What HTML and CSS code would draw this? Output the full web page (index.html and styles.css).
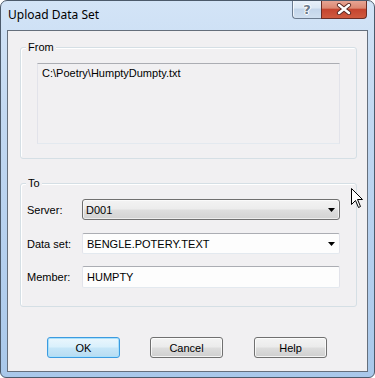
FILE: index.html
```html
<!DOCTYPE html>
<html>
<head>
<meta charset="utf-8">
<title>Upload Data Set</title>
<link rel="stylesheet" href="styles.css">
</head>
<body>
<div class="window">
  <div class="titlebar">
    <span class="title">Upload Data Set</span>
    <div class="caption-buttons">
      <div class="cbtn help-btn"><span class="qmark">?</span></div>
      <div class="cbtn close-btn">
        <svg width="16" height="12" viewBox="0 0 16 12">
          <path d="M3 2 L13 10 M13 2 L3 10" stroke="#5a2a24" stroke-width="4.2" stroke-linecap="round" fill="none"/>
          <path d="M3 2 L13 10 M13 2 L3 10" stroke="#ffffff" stroke-width="2.4" stroke-linecap="round" fill="none"/>
        </svg>
      </div>
    </div>
  </div>
  <div class="client">
    <div class="group group-from">
      <div class="group-title">From</div>
      <div class="readonly-box">C:\Poetry\HumptyDumpty.txt</div>
    </div>
    <div class="group group-to">
      <div class="group-title">To</div>
      <div class="row">
        <span class="label">Server:</span>
        <div class="combo combo-list">
          <span class="combo-text">D001</span>
          <svg class="arrow" width="7" height="4" viewBox="0 0 7 4"><path d="M0 0 H7 L3.5 4 Z" fill="#000"/></svg>
        </div>
      </div>
      <div class="row row-data">
        <span class="label">Data set:</span>
        <div class="combo combo-edit">
          <span class="combo-text">BENGLE.POTERY.TEXT</span>
          <svg class="arrow" width="7" height="4" viewBox="0 0 7 4"><path d="M0 0 H7 L3.5 4 Z" fill="#000"/></svg>
        </div>
      </div>
      <div class="row row-member">
        <span class="label">Member:</span>
        <div class="edit">HUMPTY</div>
      </div>
    </div>
    <div class="buttons">
      <div class="btn btn-default btn-ok">OK</div>
      <div class="btn btn-cancel">Cancel</div>
      <div class="btn btn-help">Help</div>
    </div>
  </div>
  <svg class="cursor" width="13" height="21" viewBox="0 0 13 21">
    <path d="M0.5 0.5 L0.5 16.5 L4.5 12.5 L7.5 19.5 L9.5 18.5 L6.5 11.5 L11.5 11.5 Z" fill="#fff" stroke="#000" stroke-width="1" stroke-linejoin="miter"/>
  </svg>
</div>
</body>
</html>
```

FILE: styles.css
```css
* {
  box-sizing: border-box;
}

html, body {
  margin: 0;
  padding: 0;
  background: #ffffff;
}

body {
  font-family: "Liberation Sans", Arial, sans-serif;
  font-size: 11px;
  color: #000;
}

.window {
  position: relative;
  width: 375px;
  height: 378px;
  border: 1px solid #4c5a6b;
  border-radius: 7px 7px 6px 6px;
  background: linear-gradient(180deg, #d3e4f7 0%, #c2d8f1 30%, #b4cfee 70%, #a9c8ea 100%);
  display: flex;
  flex-direction: column;
  overflow: hidden;
}

.titlebar {
  height: 29px;
  display: flex;
  justify-content: space-between;
  align-items: flex-start;
  padding-left: 7px;
  padding-right: 7px;
}

.title {
  font-family: "Noto Sans", "Open Sans", sans-serif;
  font-size: 12px;
  line-height: 16px;
  margin-top: 6px;
  color: #000;
}

.caption-buttons {
  display: flex;
  margin-top: -1px;
}

.cbtn {
  height: 19px;
  display: flex;
  align-items: center;
  justify-content: center;
}

.help-btn {
  width: 29px;
  border: 1px solid #6b7b8f;
  border-right: none;
  border-top: none;
  border-radius: 0 0 0 4px;
  background: linear-gradient(180deg, #e9f1fa 0%, #dbe7f4 45%, #c3d5ea 50%, #cfdff0 100%);
  box-shadow: inset 1px 0 0 rgba(255,255,255,0.7);
}

.qmark {
  font-family: "DejaVu Sans", sans-serif;
  font-weight: bold;
  font-size: 13px;
  line-height: 13px;
  color: #6c7a8a;
  text-shadow: 1px 0 0 #fff, -1px 0 0 #fff, 0 1px 0 #fff, 0 -1px 0 #fff;
}

.close-btn {
  width: 46px;
  border: 1px solid #6a2d25;
  border-top: none;
  border-radius: 0 0 4px 0;
  background: linear-gradient(180deg, #e8a898 0%, #dc8872 45%, #c5452f 52%, #cf5a3f 100%);
}

.client {
  flex: 1;
  margin: 0 6px 5px 6px;
  border: 1px solid #656f7c;
  background: #f1f0f2;
  display: flex;
  flex-direction: column;
}

.group {
  margin: 0 10px 0 12px;
  border: 1px solid #d5dfe5;
  border-radius: 3px;
  box-shadow: inset 1px 1px 0 #fff;
}

.group-from {
  margin-top: 16px;
}

.group-to {
  margin-top: 24px;
  padding-bottom: 18px;
}

.group-title {
  margin: -7px 0 0 5px;
  padding: 0 2px;
  width: fit-content;
  line-height: 13px;
  background: #f1f0f2;
}

.readonly-box {
  margin: 9px 16px 14px 16px;
  height: 81px;
  border: 1px solid #e2e3ea;
  border-top-color: #abadb3;
  border-bottom-color: #e3e9ef;
  padding: 3px 4px;
  line-height: 13px;
}

.row {
  display: flex;
  align-items: center;
  padding-left: 6px;
  padding-right: 16px;
  margin-top: 9px;
}

.row-data {
  margin-top: 13px;
}

.row-member {
  margin-top: 12px;
}

.label {
  width: 55px;
  flex: none;
}

.combo {
  flex: 1;
  height: 21px;
  display: flex;
  align-items: center;
  justify-content: space-between;
  padding-right: 4px;
}

.combo-list {
  border: 1px solid #707070;
  border-radius: 3px;
  padding-left: 3px;
  background: linear-gradient(180deg, #f3f3f3 0%, #ececec 48%, #dedede 52%, #d2d2d2 100%);
  box-shadow: inset 0 0 0 1px rgba(255,255,255,0.6);
}

.combo-edit {
  border: 1px solid #e2e3ea;
  border-top-color: #abadb3;
  border-bottom-color: #e3e9ef;
  border-radius: 2px;
  padding-left: 4px;
  background: #fdfdfd;
}

.edit {
  flex: 1;
  height: 22px;
  border: 1px solid #e2e3ea;
  border-top-color: #abadb3;
  border-bottom-color: #e3e9ef;
  border-radius: 2px;
  padding: 3px 4px;
  line-height: 14px;
  background: #fdfdfd;
}

.arrow {
  display: block;
}

.buttons {
  display: flex;
  margin-top: 30px;
  padding-left: 39px;
}

.btn {
  width: 73px;
  height: 21px;
  border: 1px solid #707070;
  border-radius: 3px;
  background: linear-gradient(180deg, #f3f3f3 0%, #ebebeb 48%, #dddddd 52%, #cfcfcf 100%);
  box-shadow: inset 0 0 0 1px rgba(255,255,255,0.75);
  display: flex;
  align-items: center;
  justify-content: center;
}

.btn-default {
  border-color: #3c9be0;
  background: linear-gradient(180deg, #eaf6fd 0%, #d9f0fc 48%, #c6e6f8 52%, #b7dcf2 100%);
  box-shadow: inset 0 0 0 1px #a8e0fb;
}

.btn-cancel {
  margin-left: 30px;
}

.btn-help {
  margin-left: 31px;
}

.cursor {
  position: absolute;
  left: 350px;
  top: 187px;
}
```
